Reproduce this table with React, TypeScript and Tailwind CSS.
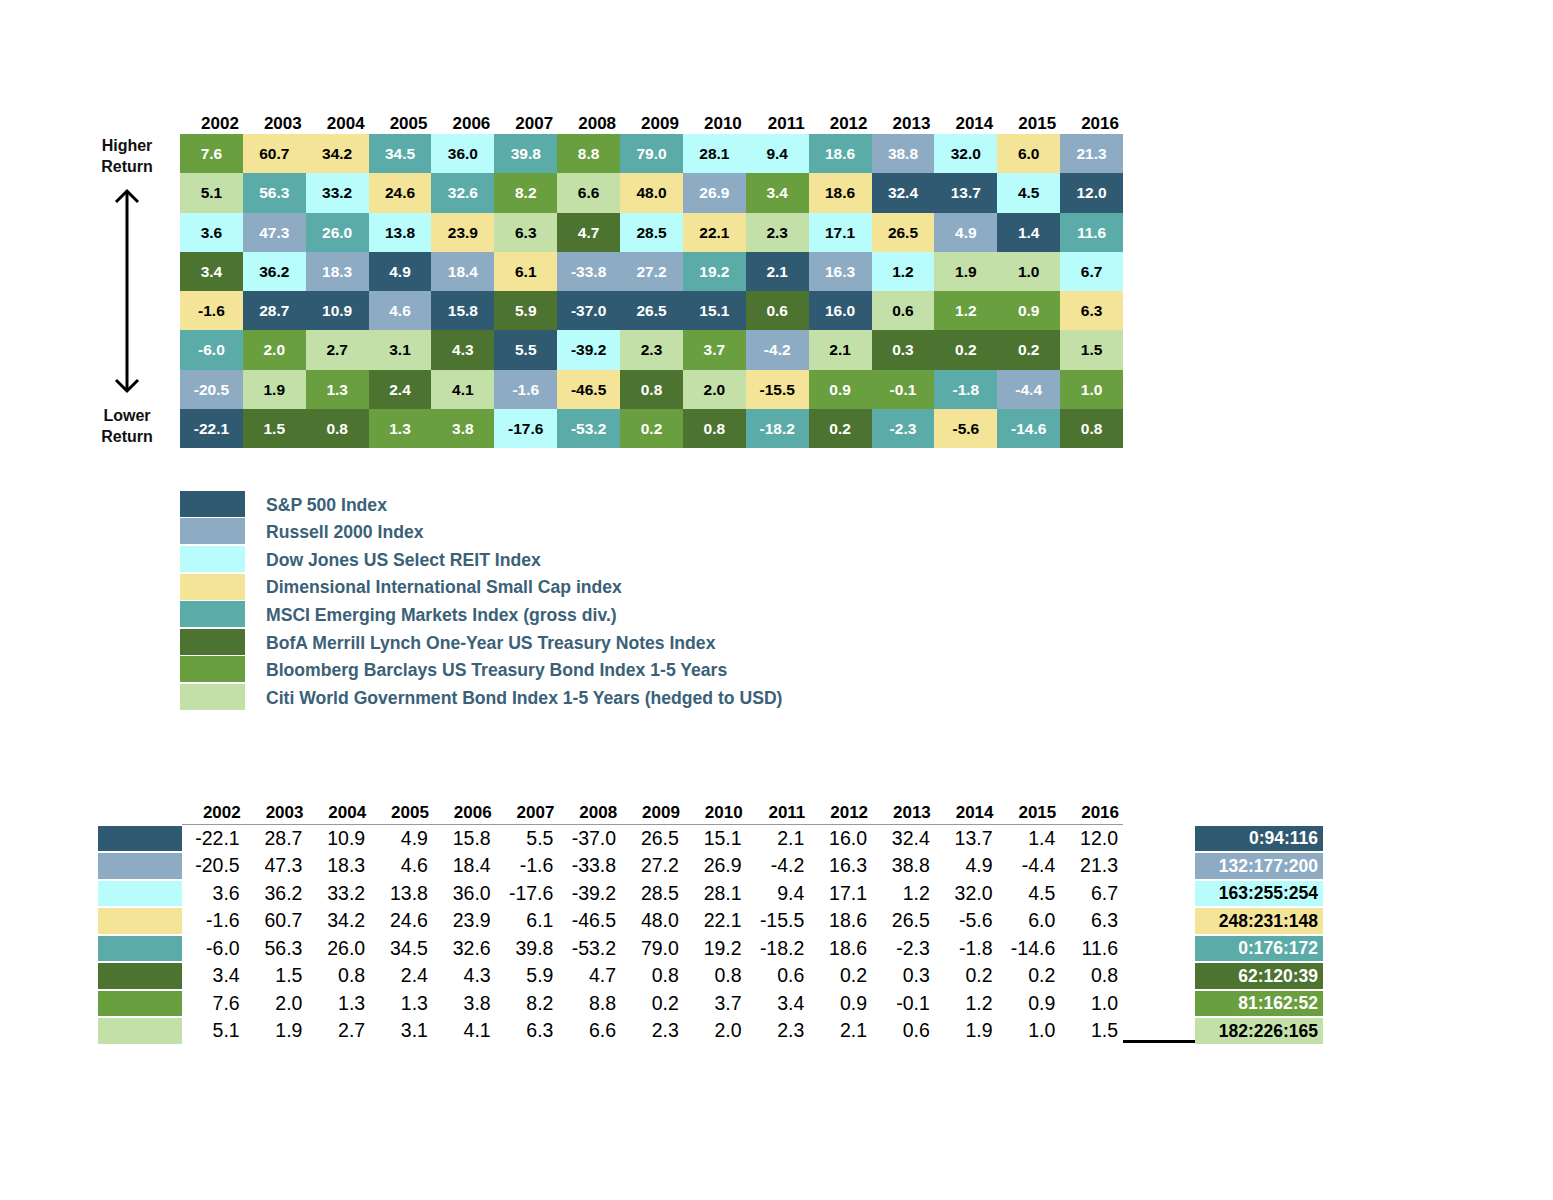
import React from "react";

type Index = {
  name: string;
  bg: string;
  text: string;
  rgb: string;
  returns: number[];
};

const years = [
  2002, 2003, 2004, 2005, 2006, 2007, 2008, 2009, 2010, 2011, 2012, 2013, 2014, 2015, 2016,
];

const indexes: Index[] = [
  {
    name: "S&P 500 Index",
    bg: "bg-[#2f5a71]",
    text: "text-white",
    rgb: "0:94:116",
    returns: [-22.1, 28.7, 10.9, 4.9, 15.8, 5.5, -37.0, 26.5, 15.1, 2.1, 16.0, 32.4, 13.7, 1.4, 12.0],
  },
  {
    name: "Russell 2000 Index",
    bg: "bg-[#8eabc4]",
    text: "text-white",
    rgb: "132:177:200",
    returns: [-20.5, 47.3, 18.3, 4.6, 18.4, -1.6, -33.8, 27.2, 26.9, -4.2, 16.3, 38.8, 4.9, -4.4, 21.3],
  },
  {
    name: "Dow Jones US Select REIT Index",
    bg: "bg-[#b8fcfb]",
    text: "text-black",
    rgb: "163:255:254",
    returns: [3.6, 36.2, 33.2, 13.8, 36.0, -17.6, -39.2, 28.5, 28.1, 9.4, 17.1, 1.2, 32.0, 4.5, 6.7],
  },
  {
    name: "Dimensional International Small Cap index",
    bg: "bg-[#f3e497]",
    text: "text-black",
    rgb: "248:231:148",
    returns: [-1.6, 60.7, 34.2, 24.6, 23.9, 6.1, -46.5, 48.0, 22.1, -15.5, 18.6, 26.5, -5.6, 6.0, 6.3],
  },
  {
    name: "MSCI Emerging Markets Index (gross div.)",
    bg: "bg-[#5baca8]",
    text: "text-white",
    rgb: "0:176:172",
    returns: [-6.0, 56.3, 26.0, 34.5, 32.6, 39.8, -53.2, 79.0, 19.2, -18.2, 18.6, -2.3, -1.8, -14.6, 11.6],
  },
  {
    name: "BofA Merrill Lynch One-Year US Treasury Notes Index",
    bg: "bg-[#4d7331]",
    text: "text-white",
    rgb: "62:120:39",
    returns: [3.4, 1.5, 0.8, 2.4, 4.3, 5.9, 4.7, 0.8, 0.8, 0.6, 0.2, 0.3, 0.2, 0.2, 0.8],
  },
  {
    name: "Bloomberg Barclays US Treasury Bond Index 1-5 Years",
    bg: "bg-[#6a9f3f]",
    text: "text-white",
    rgb: "81:162:52",
    returns: [7.6, 2.0, 1.3, 1.3, 3.8, 8.2, 8.8, 0.2, 3.7, 3.4, 0.9, -0.1, 1.2, 0.9, 1.0],
  },
  {
    name: "Citi World Government Bond Index 1-5 Years (hedged to USD)",
    bg: "bg-[#c3e0a8]",
    text: "text-black",
    rgb: "182:226:165",
    returns: [5.1, 1.9, 2.7, 3.1, 4.1, 6.3, 6.6, 2.3, 2.0, 2.3, 2.1, 0.6, 1.9, 1.0, 1.5],
  },
];

// each year's column, best return on top
const ranked = years.map((_, y) =>
  indexes
    .map((ix, i) => ({ ix, i, v: ix.returns[y] }))
    .sort((a, b) => b.v - a.v || b.i - a.i)
);

const fmt = (v: number) => v.toFixed(1);

const Arrow = () => (
  <svg width="26" height="206" viewBox="0 0 26 206" fill="none" stroke="#000" strokeWidth="3">
    <line x1="13" y1="3" x2="13" y2="203" />
    <path d="M2 14 L13 3 L24 14" strokeLinejoin="miter" />
    <path d="M2 192 L13 203 L24 192" strokeLinejoin="miter" />
  </svg>
);

const RankTable = () => (
  <div className="flex pl-[88px] pt-[113px]">
    <div className="w-[78px] mr-[14px] mt-[21px] h-[314px] flex flex-col items-center text-[16px] font-bold leading-[21px] text-[#111]">
      <div className="pt-[1px] text-center">
        Higher
        <br />
        Return
      </div>
      <div className="flex-1 flex items-center justify-center">
        <Arrow />
      </div>
      <div className="pb-[1px] text-center">
        Lower
        <br />
        Return
      </div>
    </div>
    <div className="w-[943px]">
      <div className="grid grid-cols-[repeat(15,minmax(0,1fr))] h-[21px] text-[17px] font-bold leading-[21px] text-black">
        {years.map((y) => (
          <div key={y} className="text-right pr-[4px]">
            {y}
          </div>
        ))}
      </div>
      <div className="grid grid-cols-[repeat(15,minmax(0,1fr))] grid-flow-col grid-rows-[repeat(8,39.25px)]">
        {ranked.map((col, y) =>
          col.map((c) => (
            <div
              key={`${y}-${c.i}`}
              className={`${c.ix.bg} ${c.ix.text} flex items-center justify-center text-[15.5px] font-bold`}
            >
              {fmt(c.v)}
            </div>
          ))
        )}
      </div>
    </div>
  </div>
);

const Legend = () => (
  <div className="pl-[180px] pt-[42px] flex flex-col">
    {indexes.map((ix) => (
      <div key={ix.name} className="flex items-center h-[27.6px]">
        <div className={`${ix.bg} w-[65px] h-[26px]`} />
        <div className="ml-[21px] pt-[2px] text-[17.6px] font-bold text-[#3a6177]">{ix.name}</div>
      </div>
    ))}
  </div>
);

const DataTable = () => (
  <div className="pl-[98px] pt-[92px] flex items-end">
    <div className="w-[84px] flex flex-col">
      {indexes.map((ix) => (
        <div key={ix.name} className="h-[27.5px] flex items-center">
          <div className={`${ix.bg} w-full h-[25.5px]`} />
        </div>
      ))}
    </div>
    <div className="w-[941px]">
      <div className="grid grid-cols-[repeat(15,minmax(0,1fr))] h-[22px] text-[17px] font-bold leading-[20px] text-black border-b-[1.5px] border-[#9a9a9a]">
        {years.map((y) => (
          <div key={y} className="text-right pr-[4px]">
            {y}
          </div>
        ))}
      </div>
      {indexes.map((ix) => (
        <div
          key={ix.name}
          className="grid grid-cols-[repeat(15,minmax(0,1fr))] h-[27.5px] items-center text-[19.5px] leading-none text-black"
        >
          {ix.returns.map((v, y) => (
            <div key={y} className="text-right pr-[5px]">
              {fmt(v)}
            </div>
          ))}
        </div>
      ))}
    </div>
    <div className="w-[72px] h-[3px] bg-black mb-[2px]" />
    <div className="w-[128px] flex flex-col">
      {indexes.map((ix) => (
        <div key={ix.name} className="h-[27.5px] flex items-center">
          <div
            className={`${ix.bg} ${ix.text} w-full h-[25.5px] flex items-center justify-end pr-[5px] text-[17.5px] font-bold`}
          >
            {ix.rgb}
          </div>
        </div>
      ))}
    </div>
  </div>
);

export default function App() {
  return (
    <div className="w-[1553px] h-[1200px] bg-white font-['Liberation_Sans',Arial,sans-serif]">
      <RankTable />
      <Legend />
      <DataTable />
    </div>
  );
}
